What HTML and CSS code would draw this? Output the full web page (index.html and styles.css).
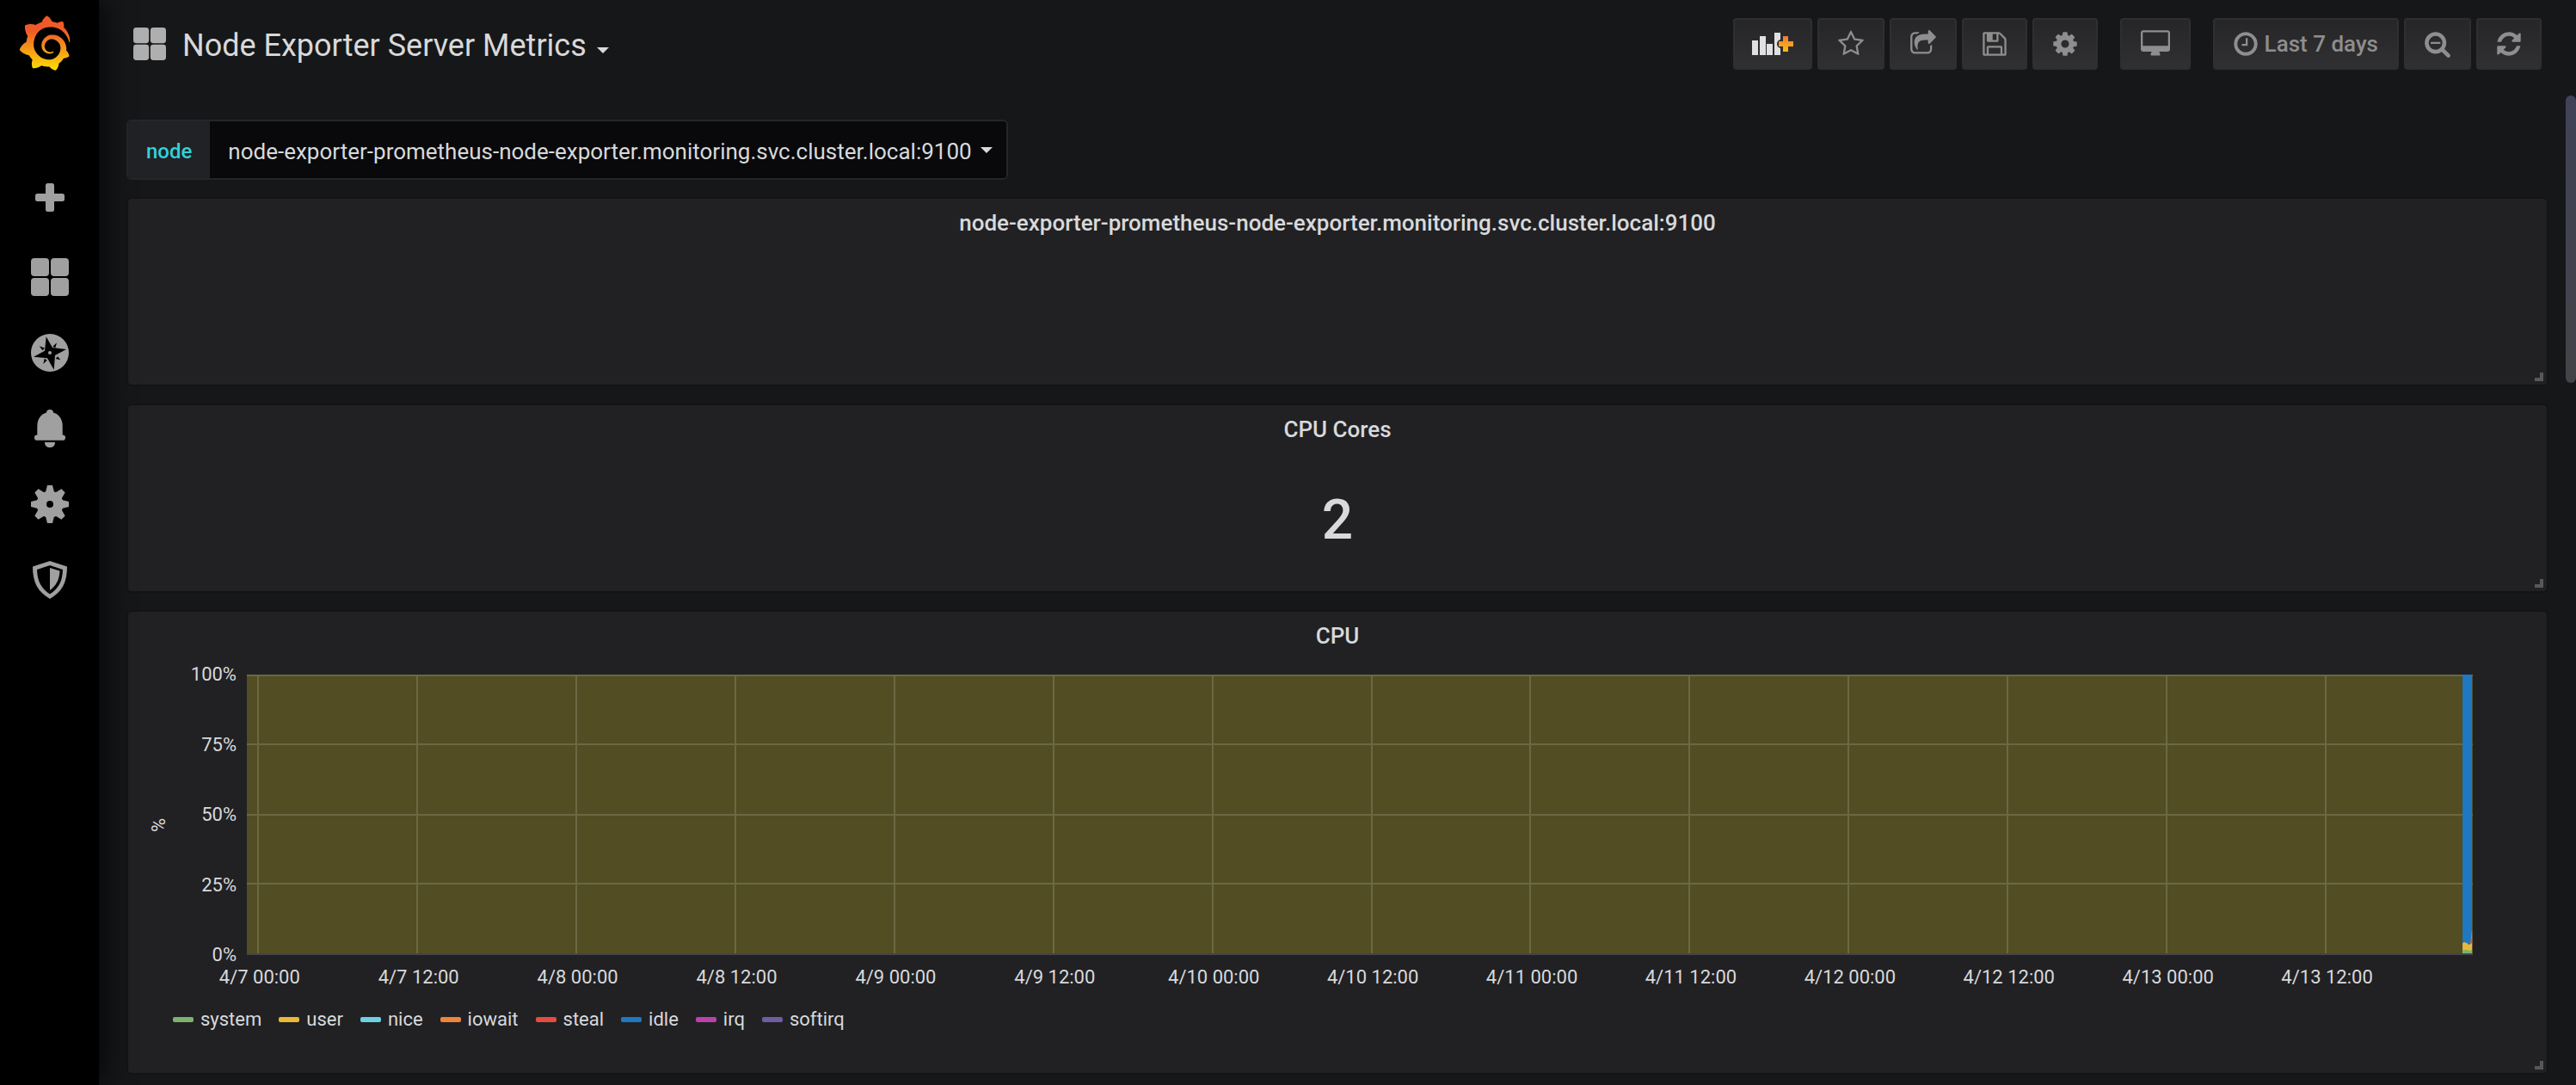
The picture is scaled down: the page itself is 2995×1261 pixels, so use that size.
FILE: index.html
```html
<!DOCTYPE html>
<html lang="en">
<head>
<meta charset="utf-8">
<title>Node Exporter Server Metrics</title>
<link rel="stylesheet" href="styles.css">
</head>
<body>
<svg class="sprite" aria-hidden="true">
  <symbol id="icon-apps" viewBox="0 0 44 44">
    <rect width="21" height="21" rx="4"/><rect x="23" width="21" height="21" rx="4"/>
    <rect y="23" width="21" height="21" rx="4"/><rect x="23" y="23" width="21" height="21" rx="4"/>
  </symbol>
</svg>
<div class="app">
  <nav class="sidebar" aria-label="Main">
    <a class="logo" href="#" aria-label="Home">
      <svg width="62" height="64" viewBox="0 0 351 365">
        <defs><linearGradient id="flame" gradientUnits="userSpaceOnUse" x1="175" y1="400" x2="175" y2="100"><stop offset="0" stop-color="#fff100"/><stop offset="1" stop-color="#f05a28"/></linearGradient></defs>
        <path fill="url(#flame)" d="M342,161.2c-0.6-6.1-1.6-13.1-3.6-20.9c-2-7.7-5-16.2-9.4-25c-4.4-8.8-10.1-17.9-17.5-26.8c-2.9-3.5-6.1-6.9-9.5-10.2c5.1-20.3-6.2-37.9-6.2-37.9c-19.5-1.2-31.9,6.1-36.5,9.4c-0.8-0.3-1.5-0.7-2.3-1c-3.3-1.3-6.7-2.6-10.3-3.7c-3.5-1.1-7.1-2.1-10.8-3c-3.7-0.9-7.4-1.6-11.2-2.2c-0.7-0.1-1.3-0.2-2-0.3c-8.5-27.2-32.9-38.6-32.9-38.6c-27.3,17.3-32.4,41.5-32.4,41.5s-0.1,0.5-0.3,1.4c-1.5,0.4-3,0.9-4.5,1.3c-2.1,0.6-4.2,1.4-6.2,2.2c-2.1,0.8-4.1,1.6-6.2,2.5c-4.1,1.8-8.2,3.8-12.2,6c-3.9,2.2-7.7,4.6-11.4,7.1c-0.5-0.2-1-0.4-1-0.4c-37.8-14.4-71.3,2.9-71.3,2.9c-3.1,40.2,15.1,65.5,18.7,70.1c-0.9,2.5-1.7,5-2.5,7.5c-2.8,9.1-4.9,18.4-6.2,28.1c-0.2,1.4-0.4,2.8-0.5,4.2C18.8,192.7,8.5,228,8.5,228c29.1,33.5,63.1,35.6,63.1,35.6c0,0,0.1-0.1,0.1-0.1c4.3,7.7,9.3,15,14.9,21.9c2.4,2.9,4.8,5.6,7.4,8.3c-10.6,30.4,1.5,55.6,1.5,55.6c32.4,1.2,53.7-14.2,58.2-17.7c3.2,1.1,6.5,2.1,9.8,2.9c10,2.6,20.2,4.1,30.4,4.5c2.5,0.1,5.1,0.2,7.6,0.1l1.2,0l0.8,0l1.6,0l1.6-0.1l0,0.1c15.3,21.8,42.1,24.9,42.1,24.9c19.1-20.1,20.2-40.1,20.2-44.4l0,0c0,0,0-0.1,0-0.3c0-0.4,0-0.6,0-0.6l0,0c0-0.3,0-0.6,0-0.9c4-2.8,7.8-5.8,11.4-9.1c7.6-6.9,14.3-14.8,19.9-23.3c0.5-0.8,1-1.6,1.5-2.4c21.6,1.2,36.9-13.4,36.9-13.4c-3.6-22.5-16.4-33.5-19.1-35.6l0,0c0,0-0.1-0.1-0.3-0.2c-0.2-0.1-0.2-0.2-0.2-0.2c0,0,0,0,0,0c-0.1-0.1-0.3-0.2-0.5-0.3c0.1-1.4,0.2-2.7,0.3-4.1c0.2-2.4,0.2-4.9,0.2-7.3l0-1.8l0-0.9l0-0.5c0-0.6,0-0.4,0-0.6l-0.1-1.5l-0.1-2c0-0.7-0.1-1.3-0.2-1.9c-0.1-0.6-0.1-1.3-0.2-1.9l-0.2-1.9l-0.3-1.9c-0.4-2.5-0.8-4.9-1.4-7.4c-2.3-9.7-6.1-18.9-11-27.2c-5-8.3-11.2-15.6-18.3-21.8c-7-6.2-14.9-11.2-23.1-14.9c-8.3-3.7-16.9-6.1-25.5-7.2c-4.3-0.6-8.6-0.8-12.9-0.7l-1.6,0l-0.4,0c-0.1,0-0.6,0-0.5,0l-0.7,0l-1.6,0.1c-0.6,0-1.2,0.1-1.7,0.1c-2.2,0.2-4.4,0.5-6.5,0.9c-8.6,1.6-16.7,4.7-23.8,9c-7.1,4.3-13.3,9.6-18.3,15.6c-5,6-8.9,12.7-11.6,19.6c-2.7,6.9-4.2,14.1-4.6,21c-0.1,1.7-0.1,3.5-0.1,5.2c0,0.4,0,0.9,0,1.3l0.1,1.4c0.1,0.8,0.1,1.7,0.2,2.5c0.3,3.5,1,6.9,1.9,10.1c1.9,6.5,4.9,12.4,8.6,17.4c3.7,5,8.2,9.1,12.9,12.4c4.7,3.2,9.8,5.5,14.8,7c5,1.5,10,2.1,14.7,2.1c0.6,0,1.2,0,1.7,0c0.3,0,0.6,0,0.9,0c0.3,0,0.6,0,0.9-0.1c0.5,0,1-0.1,1.5-0.1c0.1,0,0.3,0,0.4-0.1l0.5-0.1c0.3,0,0.6-0.1,0.9-0.1c0.6-0.1,1.1-0.2,1.7-0.3c0.6-0.1,1.1-0.2,1.6-0.4c1.1-0.2,2.1-0.6,3.1-0.9c2-0.7,4-1.5,5.7-2.4c1.8-0.9,3.4-2,5-3c0.4-0.3,0.9-0.6,1.3-1c1.6-1.3,1.9-3.7,0.6-5.3c-1.1-1.4-3.1-1.8-4.7-0.9c-0.4,0.2-0.8,0.4-1.2,0.6c-1.4,0.7-2.8,1.3-4.3,1.8c-1.5,0.5-3.1,0.9-4.7,1.2c-0.8,0.1-1.6,0.2-2.5,0.3c-0.4,0-0.8,0.1-1.3,0.1c-0.4,0-0.9,0-1.2,0c-0.4,0-0.8,0-1.2,0c-0.5,0-1,0-1.5-0.1c0,0-0.3,0-0.1,0l-0.2,0l-0.3,0c-0.2,0-0.5,0-0.7-0.1c-0.5-0.1-0.9-0.1-1.4-0.2c-3.7-0.5-7.4-1.6-10.9-3.2c-3.6-1.6-7-3.8-10.1-6.6c-3.1-2.8-5.8-6.1-7.9-9.9c-2.1-3.8-3.6-8-4.3-12.4c-0.3-2.2-0.5-4.5-0.4-6.7c0-0.6,0.1-1.2,0.1-1.8c0,0.2,0-0.1,0-0.1l0-0.2l0-0.5c0-0.3,0.1-0.6,0.1-0.9c0.1-1.2,0.3-2.4,0.5-3.6c1.7-9.6,6.5-19,13.9-26.1c1.9-1.8,3.9-3.4,6-4.9c2.1-1.5,4.4-2.8,6.8-3.9c2.4-1.1,4.8-2,7.4-2.7c2.5-0.7,5.1-1.1,7.8-1.4c1.3-0.1,2.6-0.2,4-0.2c0.4,0,0.6,0,0.9,0l1.1,0l0.7,0c0.3,0,0,0,0.1,0l0.3,0l1.1,0.1c2.9,0.2,5.7,0.6,8.5,1.3c5.6,1.2,11.1,3.3,16.2,6.1c10.2,5.7,18.9,14.5,24.2,25.1c2.7,5.3,4.6,11,5.5,16.9c0.2,1.5,0.4,3,0.5,4.5l0.1,1.1l0.1,1.1c0,0.4,0,0.8,0,1.1c0,0.4,0,0.8,0,1.1l0,1l0,1.1c0,0.7-0.1,1.9-0.1,2.6c-0.1,1.6-0.3,3.3-0.5,4.9c-0.2,1.6-0.5,3.2-0.8,4.8c-0.3,1.6-0.7,3.2-1.1,4.7c-0.8,3.1-1.8,6.2-3,9.3c-2.4,6-5.6,11.8-9.4,17.1c-7.7,10.6-18.2,19.2-30.2,24.7c-6,2.7-12.3,4.7-18.8,5.7c-3.2,0.6-6.5,0.9-9.8,1l-0.6,0l-0.5,0l-1.1,0l-1.6,0l-0.8,0c0.4,0-0.1,0-0.1,0l-0.3,0c-1.8,0-3.5-0.1-5.3-0.3c-7-0.5-13.9-1.8-20.7-3.7c-6.7-1.9-13.2-4.6-19.4-7.8c-12.3-6.6-23.4-15.6-32-26.5c-4.3-5.4-8.1-11.3-11.2-17.4c-3.1-6.1-5.6-12.6-7.4-19.1c-1.8-6.6-2.9-13.3-3.4-20.1l-0.1-1.3l0-0.3l0-0.3l0-0.6l0-1.1l0-0.3l0-0.4l0-0.8l0-1.6l0-0.3c0,0,0,0.1,0-0.1l0-0.6c0-0.8,0-1.7,0-2.5c0.1-3.3,0.4-6.8,0.8-10.2c0.4-3.4,1-6.9,1.7-10.3c0.7-3.4,1.5-6.8,2.5-10.2c1.9-6.7,4.3-13.2,7.1-19.3c5.7-12.2,13.1-23.1,22-31.8c2.2-2.2,4.5-4.2,6.9-6.2c2.4-1.9,4.9-3.7,7.5-5.4c2.5-1.7,5.2-3.2,7.9-4.6c1.3-0.7,2.7-1.4,4.1-2c0.7-0.3,1.4-0.6,2.1-0.9c0.7-0.3,1.4-0.6,2.1-0.9c2.8-1.2,5.7-2.2,8.7-3.1c0.7-0.2,1.5-0.4,2.2-0.7c0.7-0.2,1.5-0.4,2.2-0.6c1.5-0.4,3-0.8,4.5-1.1c0.7-0.2,1.5-0.3,2.3-0.5c0.8-0.2,1.5-0.3,2.3-0.5c0.8-0.1,1.5-0.3,2.3-0.4l1.1-0.2l1.2-0.2c0.8-0.1,1.5-0.2,2.3-0.3c0.9-0.1,1.7-0.2,2.6-0.3c0.7-0.1,1.9-0.2,2.6-0.3c0.5-0.1,1.1-0.1,1.6-0.2l1.1-0.1l0.5-0.1l0.6,0c0.9-0.1,1.7-0.1,2.6-0.2l1.3-0.1c0,0,0.5,0,0.1,0l0.3,0l0.6,0c0.7,0,1.5-0.1,2.2-0.1c2.9-0.1,5.9-0.1,8.8,0c5.8,0.2,11.5,0.9,17,1.9c11.1,2.1,21.5,5.6,31,10.3c9.5,4.6,17.9,10.3,25.3,16.5c0.5,0.4,0.9,0.8,1.4,1.2c0.4,0.4,0.9,0.8,1.3,1.2c0.9,0.8,1.7,1.6,2.6,2.4c0.9,0.8,1.7,1.6,2.5,2.4c0.8,0.8,1.6,1.6,2.4,2.5c3.1,3.3,6,6.6,8.6,10c5.2,6.7,9.4,13.5,12.7,19.9c0.2,0.4,0.4,0.8,0.6,1.2c0.2,0.4,0.4,0.8,0.6,1.2c0.4,0.8,0.8,1.6,1.1,2.4c0.4,0.8,0.7,1.5,1.1,2.3c0.3,0.8,0.7,1.5,1,2.3c1.2,3,2.4,5.9,3.3,8.6c1.5,4.4,2.6,8.3,3.5,11.7c0.3,1.4,1.6,2.3,3,2.1c1.5-0.1,2.6-1.3,2.6-2.8C342.6,170.4,342.5,166.1,342,161.2z"/>
      </svg>
    </a>
    <div class="side-menu">
      <a class="side-link create" href="#" aria-label="Create"><svg width="34" height="34" viewBox="0 0 34 34"><path d="M14.500 0h5a2.500 2.500 0 0 1 2.500 2.500V12h9.500a2.500 2.500 0 0 1 2.500 2.500v4a2.500 2.500 0 0 1-2.500 2.500H22v9.500a2.500 2.500 0 0 1-2.500 2.500h-5a2.500 2.500 0 0 1-2.500-2.500V21H2.500A2.500 2.500 0 0 1 0 18.500v-4A2.500 2.500 0 0 1 2.500 12H12V2.500A2.500 2.500 0 0 1 14.500 0z"/></svg></a>
      <a class="side-link" href="#" aria-label="Dashboards"><svg width="44" height="44"><use href="#icon-apps"/></svg></a>
      <a class="side-link" href="#" aria-label="Explore"><svg width="44" height="44" viewBox="0 0 44 44"><circle cx="22" cy="22" r="22"/><path fill="#000" d="M17.700 3.300L25 16l16 2-13 7-1.300 16.700L19 28.300 3 26.700l13-7zM9.700 14.300l6.300 2.200-2.500 2.800zM30 10.300l-4.700 4.400 3 1.600zM14.300 35l1.400-6.300 3 2zM34.300 30.300l-5.600-1.300 2.300-2.700z"/><circle cx="22" cy="22" r="2"/></svg></a>
      <a class="side-link" href="#" aria-label="Alerting"><svg width="44" height="44" viewBox="0 0 44 44"><circle cx="22" cy="4" r="4"/><path d="M7.300 30V19C7.300 9.500 13.500 3 22 3s14.700 6.500 14.700 16v11z"/><rect x="4" y="29.500" width="36" height="6.300" rx="3.100"/><path d="M16 38h12c0 4-2.500 6-6 6s-6-2-6-6z"/></svg></a>
      <a class="side-link" href="#" aria-label="Configuration"><svg width="44" height="44" viewBox="-22 -22 44 44"><circle r="15.500"/><path id="tooth" d="M-3-22h6l2 8h-10zM-3 22h6l2-8h-10z"/><use href="#tooth" transform="rotate(45)"/><use href="#tooth" transform="rotate(90)"/><use href="#tooth" transform="rotate(135)"/><circle r="4" fill="#000"/></svg></a>
      <a class="side-link" href="#" aria-label="Server Admin"><svg width="44" height="44" viewBox="0 0 44 44"><path d="M22 0l20 6.500C42 25 36 36 22 44 8 36 2 25 2 6.500z"/><path fill="#000" d="M22 5l15 5c-.5 14-5 22-15 28.500C12 32 7.500 24 7 10z"/><path d="M22 8l11.500 3.500C33 22 29 29 22 34z"/></svg></a>
    </div>
  </nav>

  <div class="main">
    <header class="toolbar">
      <button class="dash-title" type="button"><svg class="dash-icon" width="38" height="38"><use href="#icon-apps"/></svg><span>Node Exporter Server Metrics</span><i class="caret"></i></button>
      <div class="actions">
        <div class="group">
          <button class="btn add" type="button" aria-label="Add panel"><svg width="48" height="26" viewBox="0 0 48 26"><defs><linearGradient id="warm" gradientUnits="userSpaceOnUse" x1="0" y1="3" x2="0" y2="22"><stop offset="0" stop-color="#f0753a"/><stop offset="1" stop-color="#fbc010"/></linearGradient></defs><path fill="#e0e0e2" d="M0 9h7v17H0zM9 4h7v22H9zM17 13h7v13h-7zM26 0h7v8q-4 1-4 5t4 5v8h-7z"/><path fill="url(#warm)" d="M36 4h6v6h6v6h-6v6h-6v-6h-5v-6h5z"/></svg></button>
          <button class="btn" type="button" aria-label="Mark as favorite"><svg width="30" height="32" viewBox="64 0 1664 1792"><path d="M1201 1004l306-297-422-62-189-382-189 382-422 62 306 297-73 421 378-199 377 199zm527-357q0 22-26 48l-363 354 86 500q1 7 1 20 0 50-41 50-19 0-40-12l-449-236-449 236q-22 12-40 12-21 0-31.500-14.500t-10.500-35.500q0-6 2-20l86-500-364-354q-25-27-25-48 0-37 56-46l502-73 225-455q19-41 49-41t49 41l225 455 502 73q56 9 56 46z"/></svg></button>
          <button class="btn" type="button" aria-label="Share dashboard"><svg width="30" height="32" viewBox="64 0 1664 1792"><path d="M1472 989v259q0 119-84.500 203.500t-203.500 84.500h-832q-119 0-203.500-84.500t-84.500-203.500v-832q0-119 84.500-203.500t203.500-84.500h255q13 0 22.500 9.500t9.500 22.500q0 27-26 32-77 26-133 60-10 4-16 4h-112q-66 0-113 47t-47 113v832q0 66 47 113t113 47h832q66 0 113-47t47-113v-214q0-19 18-29 28-13 54-37 16-16 35-8 21 9 21 29zm237-496l-384 384q-18 19-45 19-12 0-25-5-39-17-39-59v-192h-160q-323 0-438 131-119 137-74 473 3 23-20 34-8 2-12 2-16 0-26-13-10-14-21-31t-39.500-68.500-49.500-99.500-38.500-114-17.500-122q0-49 3.500-91t14-90 28-88 47-81.500 68.500-74 94.500-61.500 124.500-48.500 159.500-30.500 196.500-11h160v-192q0-42 39-59 13-5 25-5 26 0 45 19l384 384q19 19 19 45t-19 45z"/></svg></button>
          <button class="btn" type="button" aria-label="Save dashboard"><svg width="28" height="32" viewBox="128 0 1536 1792"><path d="M512 1536h768v-384h-768v384zm896 0h128v-896q0-14-10-38.500t-20-34.500l-281-281q-10-10-34-20t-39-10v416q0 40-28 68t-68 28h-576q-40 0-68-28t-28-68v-416h-128v1280h128v-416q0-40 28-68t68-28h832q40 0 68 28t28 68v416zm-384-928v-320q0-13-9.500-22.500t-22.500-9.500h-192q-13 0-22.500 9.500t-9.500 22.500v320q0 13 9.500 22.500t22.500 9.500h192q13 0 22.500-9.500t9.500-22.500zm640 32v928q0 40-28 68t-68 28h-1344q-40 0-68-28t-28-68v-1344q0-40 28-68t68-28h928q40 0 88 20t76 48l280 280q28 28 48 76t20 88z"/></svg></button>
          <button class="btn" type="button" aria-label="Dashboard settings"><svg width="28" height="32" viewBox="128 0 1536 1792"><path d="M1152 896q0-106-75-181t-181-75-181 75-75 181 75 181 181 75 181-75 75-181zm512-109v222q0 12-8 23t-20 13l-185 28q-19 54-39 91 35 50 107 138 10 12 10 25t-9 23q-27 37-99 108t-94 71q-12 0-26-9l-138-108q-44 23-91 38-16 136-29 186-7 28-36 28h-222q-14 0-24.500-8.500t-11.500-21.500l-28-184q-49-16-90-37l-141 107q-10 9-25 9-14 0-25-11-126-114-165-168-7-10-7-23 0-12 8-23 15-21 51-66.500t54-70.500q-27-50-41-99l-183-27q-13-2-21-12.500t-8-23.500v-222q0-12 8-23t19-13l186-28q14-46 39-92-40-57-107-138-10-12-10-24 0-10 9-23 26-36 98.500-107.500t94.500-71.500q13 0 26 10l138 107q44-23 91-38 16-136 29-186 7-28 36-28h222q14 0 24.500 8.500t11.500 21.500l28 184q49 16 90 37l142-107q9-9 24-9 13 0 25 10 129 119 165 170 7 8 7 22 0 12-8 23-15 21-51 66.500t-54 70.500q26 50 41 98l183 28q13 2 21 12.500t8 23.500z"/></svg></button>
        </div>
        <button class="btn" type="button" aria-label="Cycle view mode"><svg width="34" height="32" viewBox="-64 0 1920 1792"><path d="M1728 992v-832q0-13-9.500-22.500t-22.500-9.500h-1600q-13 0-22.500 9.500t-9.500 22.500v832q0 13 9.500 22.500t22.500 9.500h1600q13 0 22.500-9.500t9.500-22.500zm128-832v1088q0 66-47 113t-113 47h-544q0 37 16 77.500t32 71 16 43.500q0 26-19 45t-45 19h-512q-26 0-45-19t-19-45q0-14 16-44t32-70 16-78h-544q-66 0-113-47t-47-113v-1088q0-66 47-113t113-47h1600q66 0 113 47t47 113z"/></svg></button>
        <div class="group">
          <button class="btn" type="button"><svg width="28" height="32" viewBox="128 0 1536 1792"><path d="M1024 544v448q0 14-9 23t-23 9h-320q-14 0-23-9t-9-23v-64q0-14 9-23t23-9h224v-352q0-14 9-23t23-9h64q14 0 23 9t9 23zm416 352q0-148-73-273t-198-198-273-73-273 73-198 198-73 273 73 273 198 198 273 73 273-73 198-198 73-273zm224 0q0 209-103 385.500t-279.500 279.500-385.500 103-385.500-103-279.500-279.500-103-385.500 103-385.500 279.500-279.500 385.500-103 385.500 103 279.500 279.500 103 385.500z"/></svg><span>Last 7 days</span></button>
          <button class="btn" type="button" aria-label="Zoom out"><svg width="30" height="32" viewBox="64 0 1664 1792"><path d="M1088 800v64q0 13-9.500 22.500t-22.500 9.500h-576q-13 0-22.500-9.500t-9.500-22.500v-64q0-13 9.500-22.500t22.500-9.500h576q13 0 22.500 9.500t9.500 22.500zm128 32q0-185-131.500-316.500t-316.500-131.500-316.500 131.500-131.500 316.500 131.500 316.500 316.500 131.500 316.500-131.500 131.500-316.500zm512 832q0 53-37.500 90.500t-90.500 37.500q-54 0-90-38l-343-342q-179 124-399 124-143 0-273.500-55.500t-225-150-150-225-55.500-273.500 55.500-273.500 150-225 225-150 273.500-55.500 273.500 55.500 225 150 150 225 55.500 273.500q0 220-124 399l343 343q37 37 37 90z"/></svg></button>
          <button class="btn" type="button" aria-label="Refresh"><svg width="28" height="32" viewBox="128 0 1536 1792"><path d="M1639 1056q0 5-1 7-64 268-268 434.500t-478 166.500q-146 0-282.500-55t-243.500-157l-129 129q-19 19-45 19t-45-19-19-45v-448q0-26 19-45t45-19h448q26 0 45 19t19 45-19 45l-137 137q71 66 161 102t187 36q134 0 250-65t186-179q11-17 53-117 8-23 30-23h192q13 0 22.500 9.500t9.500 22.500zm25-800v448q0 26-19 45t-45 19h-448q-26 0-45-19t-19-45 19-45l138-138q-148-137-349-137-134 0-250 65t-186 179q-11 17-53 117-8 23-30 23h-199q-13 0-22.500-9.500t-9.500-22.500v-7q65-268 270-434.500t480-166.500q146 0 284 55.500t245 156.500l130-129q19-19 45-19t45 19 19 45z"/></svg></button>
        </div>
      </div>
    </header>

    <main class="dashboard">
      <div class="variable">
        <label for="node">node</label>
        <div class="picker">
          <select id="node"><option>node-exporter-prometheus-node-exporter.monitoring.svc.cluster.local:9100</option></select>
          <i class="caret"></i>
        </div>
      </div>

      <section class="panel stat">
        <h2>node-exporter-prometheus-node-exporter.monitoring.svc.cluster.local:9100</h2>
        <i class="resize"></i>
      </section>

      <section class="panel stat">
        <h2>CPU Cores</h2>
        <div class="value">2</div>
        <i class="resize"></i>
      </section>

      <section class="panel">
        <h2>CPU</h2>
        <div class="chart">
          <div class="unit"><span>%</span></div>
          <div class="y-axis"><span>100%</span><span>75%</span><span>50%</span><span>25%</span><span>0%</span></div>
          <div class="plot">
            <svg class="grid-lines" width="100%" height="100%">
              <g fill="#6b6843" shape-rendering="crispEdges">
                <rect width="100%" height="2"/><rect y="80" width="100%" height="2"/><rect y="162" width="100%" height="2"/><rect y="242" width="100%" height="2"/>
                <rect x="0.47%" width="2" height="100%"/><rect x="7.615%" width="2" height="100%"/><rect x="14.760%" width="2" height="100%"/><rect x="21.905%" width="2" height="100%"/><rect x="29.050%" width="2" height="100%"/><rect x="36.195%" width="2" height="100%"/><rect x="43.340%" width="2" height="100%"/><rect x="50.485%" width="2" height="100%"/><rect x="57.630%" width="2" height="100%"/><rect x="64.775%" width="2" height="100%"/><rect x="71.920%" width="2" height="100%"/><rect x="79.065%" width="2" height="100%"/><rect x="86.210%" width="2" height="100%"/><rect x="93.355%" width="2" height="100%"/>
              </g>
              <svg x="99.540%" width="12" height="324">
                <path fill="#1f78c1" d="M0 0h11v324H0z"/>
                <path fill="#ef843c" d="M9 314l2-18v18z"/>
                <path fill="#e24d42" d="M9 314l2-10v10z"/>
                <path fill="#eab839" d="M0 312l2-1 3 1 2 2 3-1 1-2v13H0z"/>
                <path fill="#7eb26d" d="M0 320h6l2 1 3-1v4H0z"/>
              </svg>
            </svg>
          </div>
          <div class="x-axis"><span>4/7 00:00</span><span>4/7 12:00</span><span>4/8 00:00</span><span>4/8 12:00</span><span>4/9 00:00</span><span>4/9 12:00</span><span>4/10 00:00</span><span>4/10 12:00</span><span>4/11 00:00</span><span>4/11 12:00</span><span>4/12 00:00</span><span>4/12 12:00</span><span>4/13 00:00</span><span>4/13 12:00</span></div>
        </div>
        <ul class="legend">
          <li class="system">system</li><li class="user">user</li><li class="nice">nice</li><li class="iowait">iowait</li><li class="steal">steal</li><li class="idle">idle</li><li class="irq">irq</li><li class="softirq">softirq</li>
        </ul>
        <i class="resize"></i>
      </section>
    </main>
    <div class="scroll-thumb"></div>
  </div>
</div>
</body>
</html>
```
FILE: styles.css
```css
* { box-sizing: border-box; }

body {
  margin: 0;
  background: #161719;
  color: #d8d9da;
  font-family: Roboto, "Liberation Sans", sans-serif;
  font-size: 26px;
}

button, select { font: inherit; color: inherit; }
svg { display: block; fill: currentColor; flex: none; }
.sprite { position: absolute; width: 0; height: 0; }

.app { display: flex; min-height: 100vh; }

/* Sidebar */
.sidebar {
  flex: 0 0 115px;
  position: relative;
  z-index: 2;
  background: #000;
  color: #a0a0a0;
  box-shadow: 0 0 40px #000;
}
.logo { display: block; padding: 18px 0 0 21px; height: 204px; }
.side-menu { display: flex; flex-direction: column; align-items: center; gap: 44px; }
.side-link { display: flex; align-items: center; height: 44px; color: inherit; }
.side-link.create { height: 52px; }

/* Toolbar */
.main { flex: 1; min-width: 0; position: relative; }
.toolbar {
  display: flex;
  align-items: center;
  justify-content: space-between;
  height: 102px;
  padding: 0 40px;
}
.dash-title {
  display: flex;
  align-items: center;
  padding: 0;
  border: 0;
  background: none;
  font-size: 36px;
  line-height: 44px;
}
.dash-title span { padding-top: 4px; }
.dash-icon { margin-right: 19px; color: #afafaf; }
.caret {
  border: 7px solid transparent;
  border-top-color: currentColor;
  border-bottom: 0;
}
.dash-title .caret { margin: 14px 0 0 12px; }
.actions { display: flex; gap: 26px; }
.group { display: flex; gap: 6px; }
.btn {
  display: flex;
  align-items: center;
  gap: 8px;
  height: 60px;
  padding: 0 22px;
  border: 2px solid #2f2f32;
  border-radius: 4px;
  background: linear-gradient(#262628, #303032);
  color: #8e8e8e;
  font-weight: 500;
}
.btn.add { padding: 0 20px; }

/* Dashboard */
.dashboard {
  display: flex;
  flex-direction: column;
  gap: 20px;
  padding: 37px 32px 8px;
}
.variable {
  display: flex;
  align-self: flex-start;
  height: 70px;
  border: 2px solid #262628;
  border-radius: 6px;
  overflow: hidden;
}
.variable label {
  display: flex;
  align-items: center;
  padding: 4px 21px 0;
  background: #212226;
  color: #33d1dc;
  font-size: 24px;
  font-weight: 500;
}
.picker { display: flex; align-items: center; position: relative; background: #09090b; }
.picker select {
  appearance: none;
  height: 100%;
  padding: 4px 40px 0 21px;
  border: 0;
  background: none;
}
.picker .caret { position: absolute; right: 16px; pointer-events: none; }

.panel {
  position: relative;
  border: 2px solid #141416;
  border-radius: 6px;
  background: #212124;
}
.stat { display: flex; flex-direction: column; min-height: 220px; }
.panel h2 {
  margin: 0;
  padding-top: 12px;
  font-size: 26px;
  font-weight: 500;
  line-height: 32px;
  text-align: center;
}
.value {
  flex: 1;
  display: flex;
  align-items: center;
  justify-content: center;
  padding-top: 6px;
  font-size: 64px;
  font-weight: 500;
}
.resize {
  position: absolute;
  right: 4px;
  bottom: 4px;
  width: 10px;
  height: 10px;
  border: solid #58585a;
  border-width: 0 4px 4px 0;
}

/* Graph */
.chart {
  display: grid;
  grid-template-columns: 24px 78px 1fr;
  grid-template-rows: 326px 26px;
  row-gap: 13px;
  padding: 29px 86px 0 24px;
  font-size: 22px;
  line-height: 26px;
}
.unit { display: flex; align-items: center; justify-content: center; padding-top: 24px; }
.unit span { transform: rotate(-90deg); }
.y-axis {
  display: flex;
  flex-direction: column;
  justify-content: space-between;
  align-items: flex-end;
  margin: -13px 0;
}
.plot {
  margin-left: 12px;
  border-bottom: 2px solid #444448;
  background: #524d23;
}
.x-axis {
  grid-column: 3;
  display: grid;
  grid-template-columns: repeat(14, 7.145%);
  margin-left: 12px;
  text-align: center;
  white-space: nowrap;
}
.x-axis span { position: relative; right: 42%; }

.legend {
  display: flex;
  gap: 20px;
  margin: 0;
  padding: 23px 52px 49px;
  list-style: none;
  font-size: 22px;
  line-height: 26px;
}
.legend li { display: flex; align-items: center; gap: 8px; }
.legend li::before {
  content: "";
  width: 24px;
  height: 6px;
  border-radius: 2px;
  background: var(--series);
}
.system { --series: #7eb26d; }
.user { --series: #eab839; }
.nice { --series: #6ed0e0; }
.iowait { --series: #ef843c; }
.steal { --series: #e24d42; }
.idle { --series: #1f78c1; }
.irq { --series: #ba43a9; }
.softirq { --series: #705da0; }

.scroll-thumb {
  position: absolute;
  top: 111px;
  right: 0;
  width: 12px;
  height: 334px;
  border-radius: 6px;
  background: linear-gradient(#404357, #434347);
}
```
